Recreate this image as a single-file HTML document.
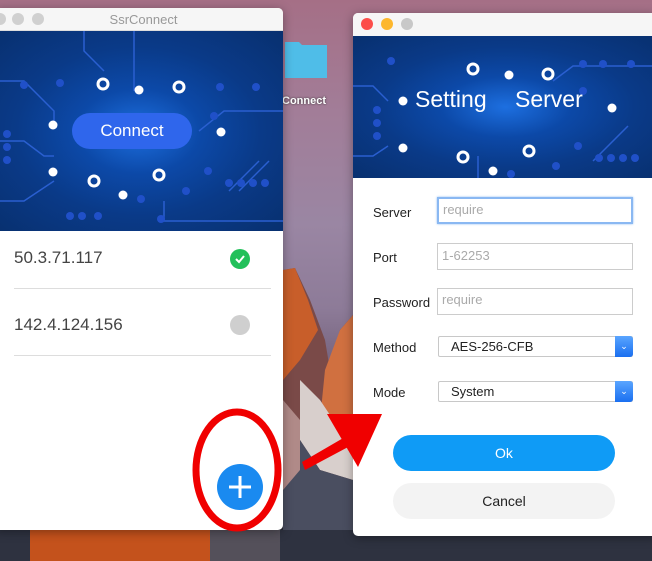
<!DOCTYPE html>
<html><head><meta charset="utf-8"><style>
*{margin:0;padding:0;box-sizing:border-box}
body{width:652px;height:561px;overflow:hidden;position:relative;font-family:"Liberation Sans",sans-serif;
background:linear-gradient(180deg,#a56f86 0%,#a27d98 20%,#9a86a3 40%,#8d7b98 55%,#6a5870 70%,#2d2f3d 88%,#22242e 100%)}
.win{position:absolute;background:#fff;border-radius:5px;overflow:hidden;box-shadow:0 2px 10px rgba(0,0,0,.35)}
.banner{position:absolute;left:0;right:0;background:radial-gradient(ellipse at 50% 50%,#1d6fe0 0%,#0c49a8 30%,#0a3a88 60%,#08306f 100%)}
.lbl{position:absolute;left:20px;font-size:13px;color:#222}
.inp{position:absolute;left:84px;width:196px;height:27px;border:1px solid #ccc;font-size:13px;color:#aaa;padding:4px 4px}
.sel{position:absolute;left:85px;width:195px;height:21px;border:1px solid #c8c8c8;font-size:13px;color:#222;padding:2px 12px;border-radius:2px}
.sel i{position:absolute;right:-1px;top:-1px;width:18px;height:21px;background:linear-gradient(#5aa5ff,#1a6ff0);border-radius:0 3px 3px 0;color:#fff;font-style:normal;font-size:9px;text-align:center;line-height:20px}
</style></head><body>
<svg style="position:absolute;left:0;top:0" width="652" height="561">
<polygon points="283,270 295,268 310,300 325,340 330,370 340,330 353,315 353,561 283,561" fill="#7a4a48"/>
<polygon points="283,270 295,268 308,300 318,330 300,360 283,380" fill="#c85e2a"/>
<polygon points="325,370 340,330 353,315 353,420 335,440 320,420" fill="#d07040"/>
<polygon points="300,380 320,400 340,430 353,430 353,480 320,470 300,440" fill="#d8cfcc"/>
<polygon points="283,420 300,440 320,470 353,480 353,561 283,561" fill="#4a4e60"/>
<polygon points="283,400 300,420 300,470 283,490" fill="#b08a88"/>
<rect x="0" y="530" width="652" height="31" fill="#2e3240"/>
<rect x="30" y="530" width="180" height="31" fill="#c4521c"/>
<rect x="210" y="530" width="70" height="31" fill="#54505a"/>
<path d="M285 42 h14 l3 3 h25 v33 h-42z" fill="#4fbde8"/>
</svg>
<div style="position:absolute;left:282px;top:95px;font-size:11px;font-weight:bold;color:#fff;text-shadow:0 0 2px #333">Connect</div>

<div class="win" style="left:-6px;top:8px;width:289px;height:522px">
 <div style="position:absolute;top:0;left:0;right:0;height:23px;background:#f6f6f6;border-bottom:1px solid #ddd"></div>
 <div style="position:absolute;top:5px;left:0;width:12px;height:12px;border-radius:50%;background:#d0d0d0"></div>
 <div style="position:absolute;top:5px;left:18px;width:12px;height:12px;border-radius:50%;background:#d0d0d0"></div>
 <div style="position:absolute;top:5px;left:38px;width:12px;height:12px;border-radius:50%;background:#d0d0d0"></div>
 <div style="position:absolute;top:4px;left:0;right:0;text-align:center;font-size:13px;color:#999;padding-left:10px">SsrConnect</div>
 <div class="banner" style="top:23px;height:200px">
  <svg width="289" height="200" style="position:absolute;left:0;top:0" fill="#fff">
   <g stroke="#2a5fd0" stroke-width="1.5" fill="none"><path d="M6 50 H30 L60 80 V90"/><path d="M6 110 H30 L50 125 H60"/><path d="M6 170 H30 L60 150"/><path d="M205 100 L230 80 H289"/><path d="M235 160 L265 130"/><path d="M245 160 L275 130"/><path d="M170 170 V190 H289"/><path d="M140 0 V60"/><path d="M90 0 V20 L110 40"/></g>
   <g fill="#2050c8"><circle cx="30" cy="54" r="4"/><circle cx="66" cy="52" r="4"/><circle cx="226" cy="56" r="4"/><circle cx="262" cy="56" r="4"/><circle cx="220" cy="85" r="4"/><circle cx="13" cy="103" r="4"/><circle cx="13" cy="116" r="4"/><circle cx="13" cy="129" r="4"/><circle cx="214" cy="140" r="4"/><circle cx="235" cy="152" r="4"/><circle cx="247" cy="152" r="4"/><circle cx="259" cy="152" r="4"/><circle cx="271" cy="152" r="4"/><circle cx="192" cy="160" r="4"/><circle cx="147" cy="168" r="4"/><circle cx="76" cy="185" r="4"/><circle cx="88" cy="185" r="4"/><circle cx="104" cy="185" r="4"/><circle cx="167" cy="188" r="4"/></g>
   <circle cx="145" cy="59" r="4.5"/><circle cx="59" cy="94" r="4.5"/><circle cx="227" cy="101" r="4.5"/><circle cx="59" cy="141" r="4.5"/><circle cx="129" cy="164" r="4.5"/>
   <g stroke="#fff" stroke-width="3" fill="none"><circle cx="109" cy="53" r="5"/><circle cx="185" cy="56" r="5"/><circle cx="100" cy="150" r="5"/><circle cx="165" cy="144" r="5"/></g>
  </svg>
  <div style="position:absolute;left:78px;top:82px;width:120px;height:36px;border-radius:18px;background:#2f66ec;color:#fff;font-size:17px;text-align:center;line-height:36px">Connect</div>
 </div>
 <div style="position:absolute;left:20px;top:240px;font-size:17px;color:#444">50.3.71.117</div>
 <div style="position:absolute;left:236px;top:241px;width:20px;height:20px;border-radius:50%;background:#22c05a"><svg width="20" height="20"><path d="M6 10 L9 13 L14 7" stroke="#fff" stroke-width="2" fill="none"/></svg></div>
 <div style="position:absolute;left:20px;top:280px;width:257px;height:1px;background:#ddd"></div>
 <div style="position:absolute;left:20px;top:307px;font-size:17px;color:#444">142.4.124.156</div>
 <div style="position:absolute;left:236px;top:307px;width:20px;height:20px;border-radius:50%;background:#cfcfcf"></div>
 <div style="position:absolute;left:20px;top:347px;width:257px;height:1px;background:#ddd"></div>
 <div style="position:absolute;left:223px;top:456px;width:46px;height:46px;border-radius:50%;background:#1a8af0"><svg width="46" height="46"><path d="M23 12 V34 M12 23 H34" stroke="#fff" stroke-width="3"/></svg></div>
</div>

<div class="win" style="left:353px;top:13px;width:305px;height:523px">
 <div style="position:absolute;top:0;left:0;right:0;height:23px;background:#f6f6f6"></div>
 <div style="position:absolute;top:5px;left:8px;width:12px;height:12px;border-radius:50%;background:#fc4e4a"></div>
 <div style="position:absolute;top:5px;left:28px;width:12px;height:12px;border-radius:50%;background:#fdb72d"></div>
 <div style="position:absolute;top:5px;left:48px;width:12px;height:12px;border-radius:50%;background:#c8c8c8"></div>
 <div class="banner" style="top:23px;height:142px">
  <svg width="305" height="142" style="position:absolute;left:0;top:0" fill="#fff">
   <g stroke="#2a5fd0" stroke-width="1.5" fill="none"><path d="M0 50 H20 L35 65"/><path d="M0 120 H20 L35 110"/><path d="M200 45 L220 30 H305"/><path d="M240 125 L275 90"/><path d="M125 120 V142"/></g>
   <g fill="#2050c8"><circle cx="38" cy="25" r="4"/><circle cx="230" cy="28" r="4"/><circle cx="250" cy="28" r="4"/><circle cx="278" cy="28" r="4"/><circle cx="24" cy="74" r="4"/><circle cx="24" cy="87" r="4"/><circle cx="24" cy="100" r="4"/><circle cx="230" cy="55" r="4"/><circle cx="225" cy="110" r="4"/><circle cx="246" cy="122" r="4"/><circle cx="258" cy="122" r="4"/><circle cx="270" cy="122" r="4"/><circle cx="282" cy="122" r="4"/><circle cx="203" cy="130" r="4"/><circle cx="158" cy="138" r="4"/></g>
   <circle cx="156" cy="39" r="4.5"/><circle cx="50" cy="65" r="4.5"/><circle cx="259" cy="72" r="4.5"/><circle cx="50" cy="112" r="4.5"/><circle cx="140" cy="135" r="4.5"/>
   <g stroke="#fff" stroke-width="3" fill="none"><circle cx="120" cy="33" r="5"/><circle cx="195" cy="38" r="5"/><circle cx="110" cy="121" r="5"/><circle cx="176" cy="115" r="5"/></g>
  </svg>
  <div style="position:absolute;left:62px;top:50px;font-size:23px;color:#fff;font-weight:500">Setting</div>
  <div style="position:absolute;left:162px;top:50px;font-size:23px;color:#fff">Server</div>
 </div>
 <div class="lbl" style="top:192px">Server</div>
 <div class="inp" style="top:184px;border:2px solid #8ab8f2;box-shadow:0 0 2px #8ab8f2;padding:3px 4px">require</div>
 <div class="lbl" style="top:237px">Port</div>
 <div class="inp" style="top:230px">1-62253</div>
 <div class="lbl" style="top:282px">Password</div>
 <div class="inp" style="top:275px;padding-top:3px">require</div>
 <div class="lbl" style="top:327px">Method</div>
 <div class="sel" style="top:323px">AES-256-CFB<i>&#8964;</i></div>
 <div class="lbl" style="top:372px">Mode</div>
 <div class="sel" style="top:368px">System<i>&#8964;</i></div>
 <div style="position:absolute;left:40px;top:422px;width:222px;height:36px;border-radius:18px;background:#0f9bf6;color:#fff;font-size:14px;text-align:center;line-height:36px">Ok</div>
 <div style="position:absolute;left:40px;top:470px;width:222px;height:36px;border-radius:18px;background:#f3f3f3;color:#222;font-size:14px;text-align:center;line-height:36px">Cancel</div>
</div>

<svg style="position:absolute;left:0;top:0" width="652" height="561">
 <ellipse cx="237" cy="470" rx="41" ry="58" fill="none" stroke="#f00000" stroke-width="7"/>
 <path d="M302 462 L345 437 L350 446 L305 470z" fill="#f00000"/>
 <polygon points="327,414 382,414 358,467" fill="#f00000"/>
</svg>
</body></html>
